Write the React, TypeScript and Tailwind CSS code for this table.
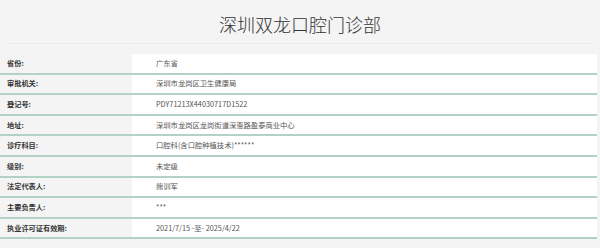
import React from "react";

const rows: [string, string][] = [
  ["省份:", "广东省"],
  ["审批机关:", "深圳市龙岗区卫生健康局"],
  ["登记号:", "PDY71213X44030717D1522"],
  ["地址:", "深圳市龙岗区龙岗街道深惠路盈泰商业中心"],
  ["诊疗科目:", "口腔科(含口腔种植技术)******"],
  ["级别:", "未定级"],
  ["法定代表人:", "熊训军"],
  ["主要负责人:", "***"],
  ["执业许可证有效期:", "2021/7/15 -至- 2025/4/22"],
];

export default function App() {
  return (
    <div
      className="w-[600px] h-[248px] overflow-hidden bg-[#f4f4f4]"
      style={{ fontFamily: '"Microsoft YaHei", "Noto Sans CJK SC", "Noto Sans", sans-serif' }}
    >
      <div className="mx-2 h-[44px] border-b border-[#ebebeb] flex items-center justify-center">
        <h1 className="text-[18px] leading-none text-[#333] font-light pt-[5px]">深圳双龙口腔门诊部</h1>
      </div>
      <div className="mt-[10px] w-[597px]">
        {rows.map(([k, v]) => (
          <div key={k} className="flex h-[20.6px] border-b-2 border-[#b3d2c6]">
            <div className="w-[132px] pl-[7px] flex items-center text-[7.2px] font-bold text-[#333]">{k}</div>
            <div className="flex-1 bg-white pl-[24px] flex items-center text-[7.3px] text-[#555]">{v}</div>
          </div>
        ))}
      </div>
    </div>
  );
}
